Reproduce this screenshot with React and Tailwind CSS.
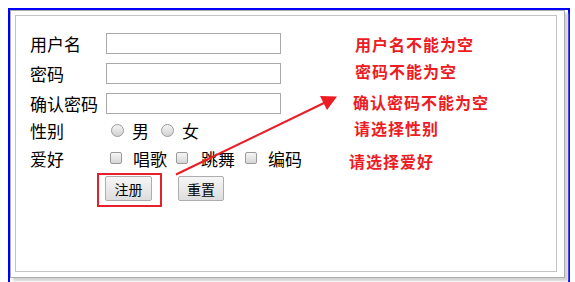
import React from "react";

const font = { fontFamily: '"Noto Sans CJK SC", "Noto Sans", sans-serif' };

function Radio() {
  return (
    <span className="inline-block w-[13px] h-[13px] rounded-full border border-[#9a9a9a] bg-gradient-to-b from-[#f4f4f4] to-[#d2d2d2] shrink-0" />
  );
}

function Check() {
  return (
    <span className="inline-block w-[12px] h-[12px] rounded-[2px] border border-[#9a9a9a] bg-gradient-to-b from-[#f6f6f6] to-[#d6d6d6] shrink-0" />
  );
}

function Input() {
  return <div className="w-[175px] h-[21px] border border-[#a9a9a9] bg-white" />;
}

function Btn({ children, w }) {
  return (
    <div
      className={`h-[25px] ${w} flex items-center justify-center rounded-[2px] border border-[#adadad] bg-gradient-to-b from-[#f6f6f6] to-[#dddddd] text-[14px] leading-none text-black`}
    >
      {children}
    </div>
  );
}

export default function App() {
  return (
    <div
      className="relative w-[575px] h-[282px] overflow-hidden bg-white text-black"
      style={font}
    >
      <div className="pt-[8px] pl-[8px]">
        <div className="w-[562px] h-[280px] border-2 border-b-0 border-[#0000ff]">
          <div className="w-[555px] h-[268px] border border-[#ababab] shadow-[3px_3px_2px_#d4d4d4] p-[4px]">
            <div className="w-[542px] h-[257px] border border-[#c4c4c4] pl-[14px] pt-[12px] text-[17px] leading-none">
              <div className="flex items-center h-[30px]">
                <span className="w-[76px]">用户名</span>
                <Input />
              </div>
              <div className="flex items-center h-[30px]">
                <span className="w-[76px]">密码</span>
                <Input />
              </div>
              <div className="flex items-center h-[30px]">
                <span className="w-[76px]">确认密码</span>
                <Input />
              </div>
              <div className="flex items-center h-[22px] mt-[1px]">
                <span className="w-[76px]">性别</span>
                <div className="flex items-center pl-[5px]">
                  <Radio />
                  <span className="ml-[8px]">男</span>
                  <span className="ml-[12px] flex"><Radio /></span>
                  <span className="ml-[8px]">女</span>
                </div>
              </div>
              <div className="flex items-center h-[22px] mt-[6px]">
                <span className="w-[76px]">爱好</span>
                <div className="flex items-center pl-[4px]">
                  <Check />
                  <span className="ml-[11px]">唱歌</span>
                  <span className="ml-[9px] flex"><Check /></span>
                  <span className="ml-[13px]">跳舞</span>
                  <span className="ml-[10px] flex"><Check /></span>
                  <span className="ml-[11px]">编码</span>
                </div>
              </div>
              <div className="flex items-start mt-[4px] ml-[67px]">
                <div className="border-2 border-[#e8202a] pl-[6px] pt-[1px] pr-[8px] pb-[4px]">
                  <Btn w="w-[47px]">注册</Btn>
                </div>
                <div className="ml-[16px] mt-[3px]">
                  <Btn w="w-[46px]">重置</Btn>
                </div>
              </div>
            </div>
          </div>
        </div>
      </div>

      {/* annotation layer */}
      <div className="absolute left-0 top-0 flex flex-col text-[16px] leading-[16px] font-bold text-[#ed1c24] tracking-[1px]">
        <span className="ml-[355px] mt-[36px]">用户名不能为空</span>
        <span className="ml-[355px] mt-[11px]">密码不能为空</span>
        <span className="ml-[353px] mt-[15px]">确认密码不能为空</span>
        <span className="ml-[354px] mt-[10px]">请选择性别</span>
        <span className="ml-[349px] mt-[17px]">请选择爱好</span>
      </div>
      <svg
        className="absolute left-0 top-0 pointer-events-none"
        width="575"
        height="282"
        viewBox="0 0 575 282"
      >
        <line x1="176" y1="174.5" x2="325" y2="102.5" stroke="#ed1c24" strokeWidth="2" />
        <polygon points="320,96 337,96.5 327,110" fill="#ed1c24" />
      </svg>
    </div>
  );
}
